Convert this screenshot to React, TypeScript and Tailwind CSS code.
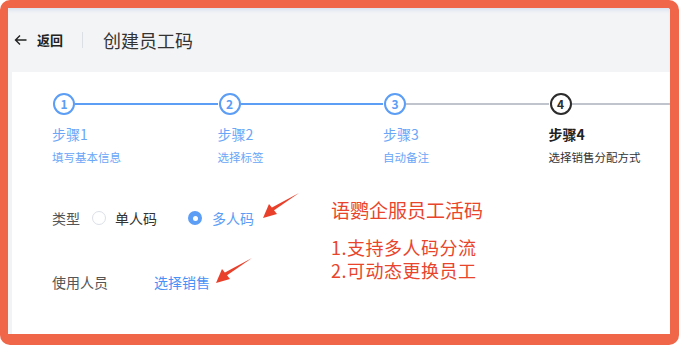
import React from "react";

const STEPS = [
  { title: "步骤1", desc: "填写基本信息", done: true },
  { title: "步骤2", desc: "选择标签", done: true },
  { title: "步骤3", desc: "自动备注", done: true },
  { title: "步骤4", desc: "选择销售分配方式", done: false },
];

function Arrow({ className }: { className: string }) {
  // red hand-drawn style pointer, tail top-right, tip bottom-left
  return (
    <svg className={className} width="40" height="30" viewBox="0 0 40 30">
      <path d="M38 1 L12 19 L10 16 Z" fill="#e8402a" />
      <path d="M2 26 L8 12 L16 22 Z" fill="#e8402a" />
    </svg>
  );
}

export default function App() {
  return (
    <div
      className="w-[679px] h-[345px] bg-[#ef6649] rounded-[10px] pt-[8px] pl-[8px] pr-[9px] pb-[11px]"
      style={{ fontFamily: '"Noto Sans CJK SC", "Noto Sans", sans-serif' }}
    >
      <div className="relative flex h-full flex-col bg-[#f2f3f5] rounded-tr-[3px] overflow-hidden">
        {/* header */}
        <div className="flex h-[64px] shrink-0 items-center bg-[#f3f4f6] shadow-[inset_0_4px_4px_-2px_#d6e0ef]">
          <div className="ml-[6px] flex items-center gap-[10px] text-[#222]">
            <svg width="13" height="12" viewBox="0 0 13 12" fill="none" stroke="#222" strokeWidth="1.4">
              <path d="M12.5 6H1.5M6 1.5 1.5 6 6 10.5" />
            </svg>
            <span className="text-[13px] font-bold">返回</span>
          </div>
          <div className="ml-[19px] h-[16px] w-px bg-[#dcdfe3]" />
          <div className="ml-[20px] text-[18px] text-[#333]">创建员工码</div>
        </div>

        {/* content */}
        <div className="ml-[4px] flex-1 bg-white pl-[40px] pt-[21px]">
          <div className="flex">
            {STEPS.map((s, i) => {
              const blue = s.done;
              const lineBlue = i < 2;
              const last = i === STEPS.length - 1;
              return (
                <div key={s.title} className={last ? "flex-1" : "w-[165.5px]"}>
                  <div className="flex items-center">
                    <div
                      className={
                        "ml-px flex h-[22px] w-[22px] shrink-0 items-center justify-center rounded-full border-2 text-[12px] font-bold " +
                        (blue ? "border-[#5c9df5] text-[#5c9df5]" : "border-[#2c2c2c] text-[#2c2c2c]")
                      }
                    >
                      {i + 1}
                    </div>
                    <div className={"h-[2px] flex-1 " + (lineBlue ? "bg-[#5c9df5]" : "bg-[#c0c4cc]")} />
                  </div>
                  <div
                    className={
                      "mt-[8px] text-[14px] leading-[22px] " +
                      (blue ? "text-[#6aa6f7]" : "font-bold text-[#222]")
                    }
                  >
                    {s.title}
                  </div>
                  <div className={"mt-[3px] text-[11.5px] leading-[18px] " + (blue ? "text-[#6aa6f7]" : "text-[#333]")}>
                    {s.desc}
                  </div>
                </div>
              );
            })}
          </div>

          <div className="mt-[41px] flex items-center text-[14px] leading-[22px]">
            <span className="text-[#555]">类型</span>
            <span className="ml-[12px] h-[14px] w-[14px] rounded-full border border-[#dcdfe6]" />
            <span className="ml-[9px] text-[#333]">单人码</span>
            <span className="ml-[31px] flex h-[14px] w-[14px] items-center justify-center rounded-full bg-[#5c9df5]">
              <span className="h-[5px] w-[5px] rounded-full bg-white" />
            </span>
            <span className="ml-[10px] text-[#5c9df5]">多人码</span>
          </div>

          <div className="mt-[42px] flex items-center text-[14px] leading-[22px]">
            <span className="text-[#555]">使用人员</span>
            <span className="ml-[46px] text-[#4a90f5]">选择销售</span>
          </div>
        </div>

        {/* annotations */}
        <Arrow className="absolute left-[253px] top-[184px]" />
        <Arrow className="absolute left-[206px] top-[249px]" />
        <div className="absolute left-[323px] top-[189px] text-[19px] leading-[26px] text-[#e8452c]">
          语鹦企服员工活码
        </div>
        <div className="absolute left-[323px] top-[228px] text-[18px] leading-[23px] tracking-[0.5px] text-[#e8452c]">
          <div>1.支持多人码分流</div>
          <div>2.可动态更换员工</div>
        </div>
      </div>
    </div>
  );
}
